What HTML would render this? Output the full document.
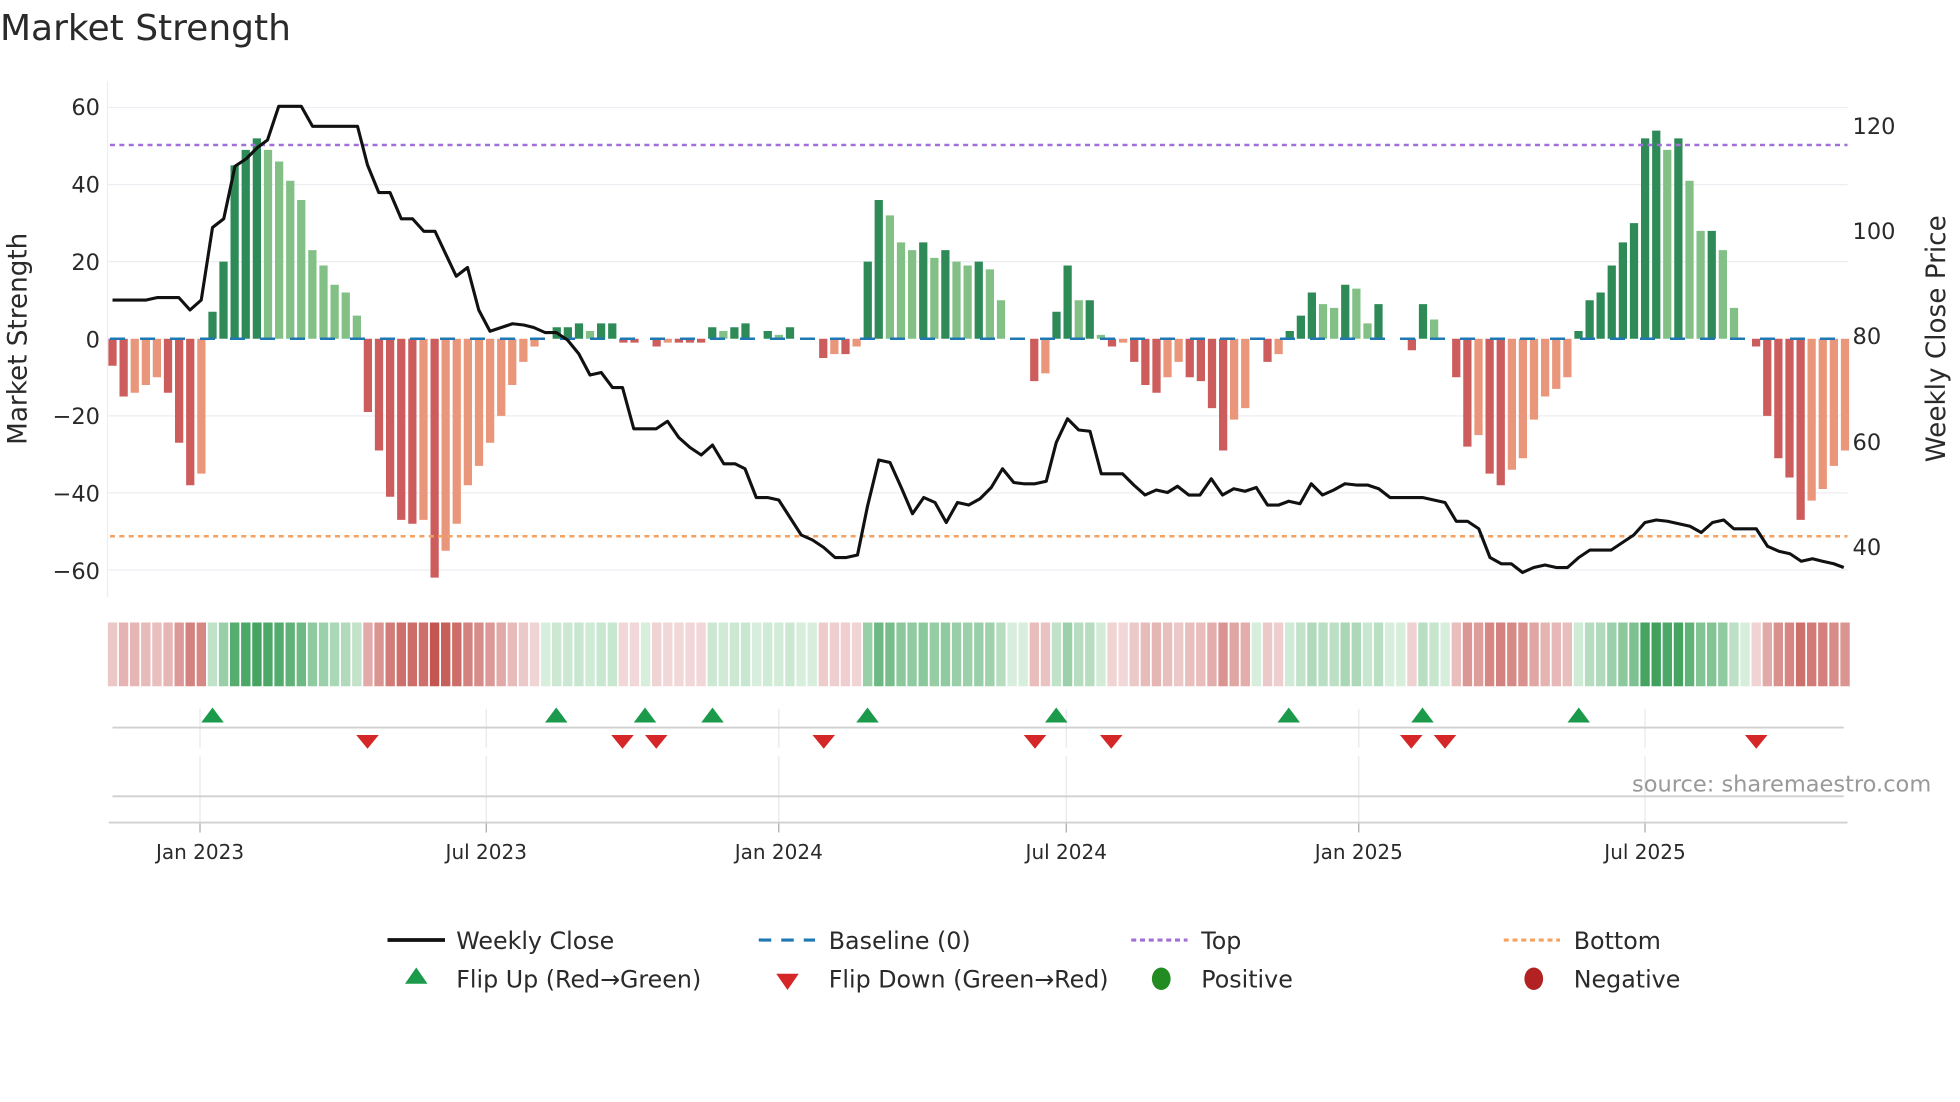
<!DOCTYPE html>
<html><head><meta charset="utf-8">
<style>
html,body{margin:0;padding:0;background:#fff;width:1960px;height:1102px;overflow:hidden}
svg{display:block}
text{font-family:"DejaVu Sans","Liberation Sans",sans-serif;fill:#2a2a2a}
</style></head><body>
<svg id="s" width="1960" height="1102" viewBox="0 0 1568 881.6" xmlns="http://www.w3.org/2000/svg">
<text x="0" y="32" font-size="28.8">Market Strength</text>
<g id="g"></g>
<text x="80" y="92" font-size="18" text-anchor="end">60</text>
<text x="80" y="154" font-size="18" text-anchor="end">40</text>
<text x="80" y="216" font-size="18" text-anchor="end">20</text>
<text x="80" y="278" font-size="18" text-anchor="end">0</text>
<text x="80" y="339" font-size="18" text-anchor="end">−20</text>
<text x="80" y="401" font-size="18" text-anchor="end">−40</text>
<text x="80" y="463" font-size="18" text-anchor="end">−60</text>
<text x="1482" y="107" font-size="18">120</text>
<text x="1482" y="191" font-size="18">100</text>
<text x="1482" y="275" font-size="18">80</text>
<text x="1482" y="360" font-size="18">60</text>
<text x="1482" y="444" font-size="18">40</text>
<text transform="translate(21,271) rotate(-90)" font-size="21" text-anchor="middle">Market Strength</text>
<text transform="translate(1556,271) rotate(-90)" font-size="21" text-anchor="middle">Weekly Close Price</text>
<text x="160" y="687" font-size="16" text-anchor="middle">Jan 2023</text>
<text x="389" y="687" font-size="16" text-anchor="middle">Jul 2023</text>
<text x="623" y="687" font-size="16" text-anchor="middle">Jan 2024</text>
<text x="853" y="687" font-size="16" text-anchor="middle">Jul 2024</text>
<text x="1087" y="687" font-size="16" text-anchor="middle">Jan 2025</text>
<text x="1316" y="687" font-size="16" text-anchor="middle">Jul 2025</text>
<text x="1545" y="633" font-size="18" text-anchor="end" style="fill:#999">source: sharemaestro.com</text>
<g font-size="19">
<line x1="310" y1="752" x2="356" y2="752" stroke="#111" stroke-width="3"/>
<text x="365" y="759">Weekly Close</text>
<line x1="607" y1="752" x2="652" y2="752" stroke="#1f77b4" stroke-width="2.5" stroke-dasharray="10,8"/>
<text x="663" y="759">Baseline (0)</text>
<line x1="905" y1="752" x2="950" y2="752" stroke="#a070d8" stroke-width="2.5" stroke-dasharray="4,3"/>
<text x="961" y="759">Top</text>
<line x1="1203" y1="752" x2="1248" y2="752" stroke="#f4a261" stroke-width="2.5" stroke-dasharray="4,3"/>
<text x="1259" y="759">Bottom</text>
<polygon points="333,774 342,787 324,787" fill="#1a9a4a"/>
<text x="365" y="790">Flip Up (Red→Green)</text>
<polygon points="621,779 639,779 630,792" fill="#d62728"/>
<text x="663" y="790">Flip Down (Green→Red)</text>
<ellipse cx="929" cy="783" rx="7.5" ry="9" fill="#228b22"/>
<text x="961" y="790">Positive</text>
<ellipse cx="1227" cy="783" rx="7.5" ry="9" fill="#b22222"/>
<text x="1259" y="790">Negative</text>
</g>
</svg>
<script>
var V=[-7,-15,-14,-12,-10,-14,-27,-38,-35,7,20,45,49,52,49,46,41,36,23,19,14,12,6,-19,-29,-41,-47,-48,-47,-62,-55,-48,-38,-33,-27,-20,-12,-6,-2,0,3,3,4,2,4,4,-1,-1,0,-2,-1,-1,-1,-1,3,2,3,4,0,2,1,3,0,0,-5,-4,-4,-2,20,36,32,25,23,25,21,23,20,19,20,18,10,0,0,-11,-9,7,19,10,10,1,-2,-1,-6,-12,-14,-10,-6,-10,-11,-18,-29,-21,-18,0,-6,-4,2,6,12,9,8,14,13,4,9,0,0,-3,9,5,0,-10,-28,-25,-35,-38,-34,-31,-21,-15,-13,-10,2,10,12,19,25,30,52,54,49,52,41,28,28,23,8,0,-2,-20,-31,-36,-47,-42,-39,-33,-29];
var N=V.length,x0=90,dx=(1476-90)/(N-1),Y0=271,k=3.083;
var P=[[90,240],[117,240],[126,238],[143,238],[152,248],[161,240],[170,182],[179,175],[188,133],[197,127],[206,118],[214,112],[223,85],[241,85],[250,101],[286,101],[294,132],[303,154],[312,154],[321,175],[330,175],[339,185],[348,185],[356,202],[365,221],[374,214],[383,248],[392,265],[401,262],[410,259],[419,260],[427,262],[436,266],[445,266],[454,272],[463,283],[472,300],[481,298],[490,310],[498,310],[507,343],[516,343],[525,343],[534,337],[543,350],[552,358],[561,364],[570,356],[579,371],[588,371],[596,375],[605,398],[614,398],[623,400],[632,414],[641,428],[650,432],[659,438],[668,446],[677,446],[686,444],[694,405],[703,368],[712,370],[721,390],[730,411],[739,398],[748,402],[757,418],[766,402],[775,404],[784,399],[793,390],[802,375],[811,386],[819,387],[828,387],[837,385],[845,354],[854,335],[863,344],[872,345],[881,379],[889,379],[898,379],[907,388],[916,396],[925,392],[934,394],[942,389],[951,396],[960,396],[969,383],[978,396],[987,391],[996,393],[1005,390],[1014,404],[1023,404],[1031,401],[1040,403],[1049,387],[1058,396],[1067,392],[1076,387],[1085,388],[1094,388],[1103,391],[1112,398],[1120,398],[1138,398],[1147,400],[1156,402],[1165,417],[1174,417],[1183,423],[1192,446],[1201,451],[1209,451],[1218,458],[1227,454],[1236,452],[1245,454],[1254,454],[1263,446],[1272,440],[1289,440],[1298,434],[1307,428],[1316,418],[1325,416],[1334,417],[1343,419],[1352,421],[1361,426],[1370,418],[1379,416],[1387,423],[1396,423],[1405,423],[1414,437],[1423,441],[1432,443],[1441,449],[1450,447],[1458,449],[1467,451],[1475,454]];
var h='';
[60,40,20,-20,-40,-60].forEach(function(v){var y=Y0-v*k;h+='<line x1="86" x2="1478" y1="'+y+'" y2="'+y+'" stroke="#eceef2" stroke-width="1"/>';});
h+='<line x1="86" x2="86" y1="65" y2="478" stroke="#eceef2"/>';
for(var i=0;i<N;i++){var v=V[i],p=i?V[i-1]:0,c,x=x0+i*dx-3.3;
 if(v>=0){c=(v>=p)?'#2e8b57':'#82c085';}else{c=(v<=p)?'#cd5c5c':'#e9967a';}
 if(v==0)continue;
 var y=v>0?Y0-v*k:Y0,hh=Math.abs(v)*k;h+='<rect x="'+x.toFixed(1)+'" y="'+y.toFixed(1)+'" width="6.6" height="'+hh.toFixed(1)+'" fill="'+c+'"/>';}
h+='<line x1="88" x2="1478" y1="271" y2="271" stroke="#1f77b4" stroke-width="2" stroke-dasharray="12,12"/>';
h+='<line x1="88" x2="1478" y1="116" y2="116" stroke="#a070d8" stroke-width="2" stroke-dasharray="4,3.5"/>';
h+='<line x1="88" x2="1478" y1="429" y2="429" stroke="#f4a261" stroke-width="2" stroke-dasharray="4,3.5"/>';
h+='<polyline fill="none" stroke="#111" stroke-width="2.5" stroke-linejoin="round" points="'+P.map(function(a){return a.join(',')}).join(' ')+'"/>';
function mix(a,b,t){return 'rgb('+a.map(function(q,j){return Math.round(q+(b[j]-q)*t)}).join(',')+')';}
for(var i=0;i<N;i++){var v=V[i],c;
 if(v>=0){c=mix([215,238,220],[60,160,90],Math.min(1,Math.pow(v/55,0.9)));}else{c=mix([242,218,218],[196,85,80],Math.min(1,Math.pow(-v/60,0.9)));}
 h+='<rect x="'+(x0+i*dx-4.45+0.7).toFixed(1)+'" y="498" width="'+(dx-1.4).toFixed(1)+'" height="51" fill="'+c+'"/>';}
[160,389,623,853,1087,1316].forEach(function(x){h+='<line x1="'+x+'" x2="'+x+'" y1="567" y2="598" stroke="#e6e8ec"/><line x1="'+x+'" x2="'+x+'" y1="605" y2="658" stroke="#e6e8ec"/><line x1="'+x+'" x2="'+x+'" y1="658" y2="666" stroke="#aaa"/>';});
h+='<line x1="90" x2="1475" y1="582" y2="582" stroke="#d0d0d0" stroke-width="1.5"/>';
h+='<line x1="90" x2="1475" y1="637" y2="637" stroke="#d0d0d0" stroke-width="1.5"/>';
h+='<line x1="87" x2="1478" y1="658" y2="658" stroke="#d0d0d0" stroke-width="1.5"/>';
[170,445,516,570,694,845,1031,1138,1263].forEach(function(x){h+='<polygon points="'+x+',566 '+(x+9)+',578 '+(x-9)+',578" fill="#1a9a4a"/>';});
[294,498,525,659,828,889,1129,1156,1405].forEach(function(x){h+='<polygon points="'+(x-9)+',588 '+(x+9)+',588 '+x+',599" fill="#d62728"/>';});
document.getElementById('g').innerHTML=h;
</script>
</body></html>
